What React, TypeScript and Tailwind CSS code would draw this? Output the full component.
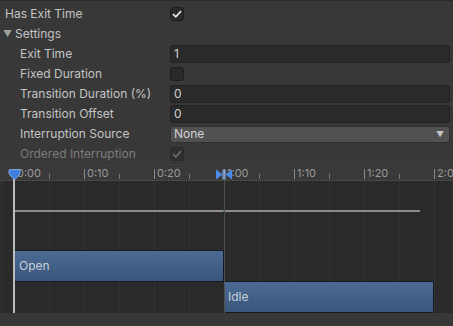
import React from "react"

const font = { fontFamily: "Inter, 'Noto Sans', sans-serif" }

function Check({ disabled }: { disabled?: boolean }) {
  return (
    <div
      className={`w-[14px] h-[14px] rounded-[3px] border flex items-center justify-center ${
        disabled ? "bg-[#2f2f2f] border-[#2a2a2a]" : "bg-[#2a2a2a] border-[#1e1e1e]"
      }`}
    >
      <svg width="10" height="8" viewBox="0 0 10 8">
        <path
          d="M1 4.2 L3.8 6.8 L9 1.2"
          fill="none"
          stroke={disabled ? "#6a6a6a" : "#e8e8e8"}
          strokeWidth="1.7"
        />
      </svg>
    </div>
  )
}

function EmptyCheck() {
  return <div className="w-[14px] h-[14px] rounded-[3px] border bg-[#2a2a2a] border-[#1e1e1e]" />
}

function Field({ value }: { value: string }) {
  return (
    <div className="flex-1 h-[18px] rounded-[3px] bg-[#2a2a2a] border border-[#212121] px-[3px] flex items-center text-[#d2d2d2]">
      {value}
    </div>
  )
}

function Row({
  label,
  indent,
  disabled,
  children,
}: {
  label: React.ReactNode
  indent?: boolean
  disabled?: boolean
  children?: React.ReactNode
}) {
  return (
    <div className="h-5 flex items-center">
      <div
        className={`w-[170px] shrink-0 ${indent ? "pl-5" : "pl-[5px]"} ${
          disabled ? "text-[#7c7c7c]" : "text-[#c4c4c4]"
        }`}
      >
        {label}
      </div>
      <div className="flex-1 flex items-center pr-[3px]">{children}</div>
    </div>
  )
}

const majors = [
  { x: 14, t: "0:00" },
  { x: 84, t: "0:10" },
  { x: 154, t: "0:20" },
  { x: 224, t: "1:00" },
  { x: 294, t: "1:10" },
  { x: 364, t: "1:20" },
  { x: 434, t: "2:00" },
]
const minors = [49, 119, 189, 259, 329, 399]

function Clip({ name, className }: { name: string; className: string }) {
  return (
    <div
      className={`relative z-10 w-[210px] h-[32px] border border-[#141a22] bg-gradient-to-b from-[#4b6a93] to-[#3b567c] flex items-center text-[#c8cfd8] text-[12px] ${className}`}
    >
      {name}
    </div>
  )
}

function Timeline() {
  return (
    <div className="relative h-[149px] bg-[#2e2e2e] overflow-hidden flex flex-col">
      {/* ruler */}
      <div className="h-[17px] shrink-0 bg-[#393939] border-t border-b border-[#444444] border-b-[#555555] border-dotted" />
      {/* grid lines */}
      {majors.map((m) => (
        <div key={"g" + m.x} className="absolute top-[17px] h-[132px] w-px bg-[#333333]" style={{ left: m.x }} />
      ))}
      {minors.map((x) => (
        <div key={"n" + x} className="absolute top-[17px] h-[132px] w-px bg-[#313131]" style={{ left: x }} />
      ))}
      {/* track area with clips in flow */}
      <div className="flex-1 mx-[4px] mr-[3px] bg-[#2a2a2a] flex flex-col justify-end">
        <Clip name="Open" className="ml-[10px] pl-[4px] -mb-px" />
        <Clip name="Idle" className="ml-[220px] pl-[3px]" />
      </div>
      {/* ticks and labels */}
      {majors.map((m) => (
        <React.Fragment key={"m" + m.x}>
          <div className="absolute top-[5px] h-[10px] w-px bg-[#8a8a8a]" style={{ left: m.x }} />
          <div
            className="absolute top-[3px] text-[11px] leading-[12px] text-[#9a9a9a]"
            style={{ left: m.x + 3 }}
          >
            {m.t}
          </div>
        </React.Fragment>
      ))}
      {minors.map((x) => (
        <div key={"t" + x} className="absolute top-[10px] h-[5px] w-px bg-[#7a7a7a]" style={{ left: x }} />
      ))}
      {/* transition line */}
      <div className="absolute z-20 left-[224px] top-[10px] h-[139px] w-px bg-[#4f4f4f]" />
      {/* curve line */}
      <div className="absolute left-[14px] top-[46px] w-[406px] h-[2px] bg-[#8c8c8c]" />
      <div className="absolute left-[223px] top-[46px] w-[2px] h-[2px] bg-[#3e8a3e]" />
      {/* playhead */}
      <div className="absolute z-20 left-[13px] top-[12px] h-[137px] w-[2px] bg-[#bcbcbc]" />
      <svg className="absolute z-30 left-[8px] top-[5px]" width="13" height="12" viewBox="0 0 13 12">
        <path d="M1 1.5 Q1 0.5 2 0.5 H11 Q12 0.5 12 1.5 V5 L6.5 11 L1 5 Z" fill="#3f7fe0" stroke="#8fb8f4" strokeWidth="0.8" />
      </svg>
      {/* transition markers */}
      <svg className="absolute z-30 left-[215px] top-[5px]" width="18" height="11" viewBox="0 0 18 11">
        <path d="M1 0.5 L7.5 5.5 L1 10.5 Z" fill="#4a8de8" />
        <rect x="7.5" y="0.5" width="1.2" height="10" fill="#8fb8f4" />
        <rect x="9.3" y="0.5" width="1.2" height="10" fill="#8fb8f4" />
        <path d="M17 0.5 L10.5 5.5 L17 10.5 Z" fill="#4a8de8" />
      </svg>
    </div>
  )
}

export default function App() {
  return (
    <div className="w-[453px] h-[326px] bg-[#383838] text-[12px] border-t border-[#2a2a2a] overflow-hidden" style={font}>
      <div className="pt-[3px]">
        <Row label="Has Exit Time">
          <Check />
        </Row>
        <div className="h-5 flex items-center pl-[3px] text-[#c4c4c4]">
          <span className="text-[9px] text-[#a0a0a0] mr-[3px]">▼</span>
          Settings
        </div>
        <Row label="Exit Time" indent>
          <Field value="1" />
        </Row>
        <Row label="Fixed Duration" indent>
          <EmptyCheck />
        </Row>
        <Row label="Transition Duration (%)" indent>
          <Field value="0" />
        </Row>
        <Row label="Transition Offset" indent>
          <Field value="0" />
        </Row>
        <Row label="Interruption Source" indent>
          <div className="flex-1 h-[17px] rounded-[3px] bg-[#515151] border border-[#303030] px-[3px] flex items-center justify-between text-[#d2d2d2]">
            <span>None</span>
            <span className="text-[8px] text-[#c4c4c4] mr-[2px]">▼</span>
          </div>
        </Row>
        <Row label="Ordered Interruption" indent disabled>
          <Check disabled />
        </Row>
      </div>
      <Timeline />
    </div>
  )
}
